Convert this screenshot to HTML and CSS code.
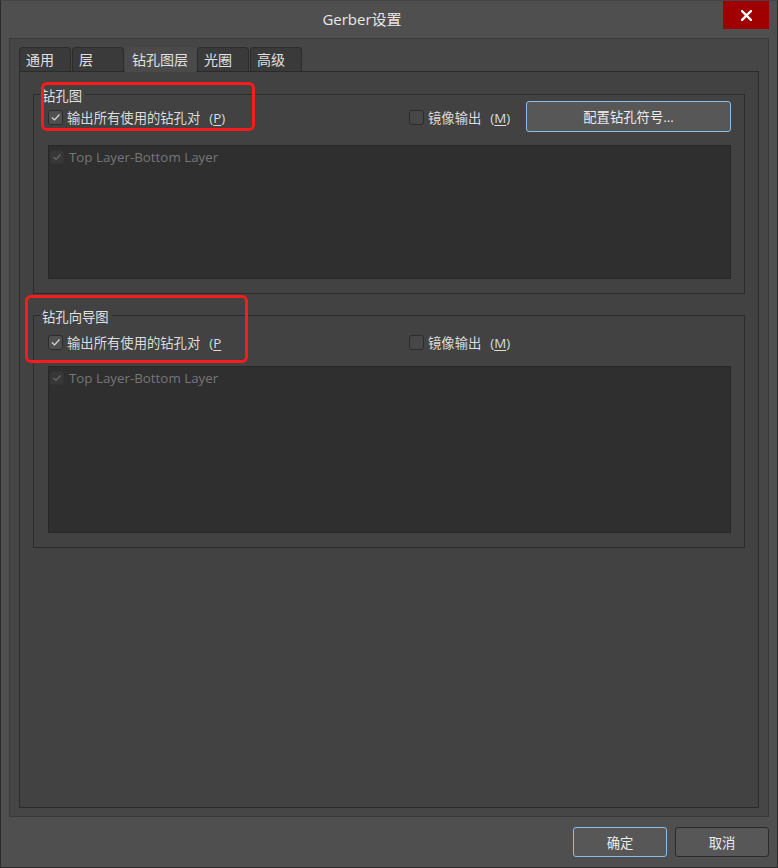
FILE: index.html
```html
<!DOCTYPE html>
<html lang="zh-CN">
<head>
<meta charset="utf-8">
<title>Gerber设置</title>
<link rel="stylesheet" href="styles.css">
</head>
<body>
<div class="window">
  <div class="titlebar">
    <div class="title">Gerber设置</div>
    <div class="close">
      <svg width="11" height="11" viewBox="0 0 11 11"><path d="M1 1L10 10M10 1L1 10" stroke="#fff" stroke-width="2.4" stroke-linecap="square"/></svg>
    </div>
  </div>
  <div class="panel">
    <div class="tabs">
      <div class="tab">通用</div>
      <div class="tab">层</div>
      <div class="tab active">钻孔图层</div>
      <div class="tab">光圈</div>
      <div class="tab">高级</div>
    </div>
    <div class="content">
      <div class="group g1">
        <div class="legend">钻孔图</div>
        <div class="row">
          <label class="check first"><span class="box checked"><svg width="11" height="11" viewBox="0 0 11 11"><path d="M2 5.5L4.5 8L9.5 2.5" fill="none" stroke="#d8d8d8" stroke-width="1.2"/></svg></span><span>输出所有使用的钻孔对<span class="acc">(<u>P</u>)</span></span></label>
          <label class="check"><span class="box"></span><span>镜像输出<span class="acc">(<u>M</u>)</span></span></label>
          <div class="btn primary config">配置钻孔符号...</div>
        </div>
        <div class="list l1">
          <div class="item"><span class="box dis"><svg width="10" height="10" viewBox="0 0 10 10"><path d="M1.5 5L4 7.5L8.5 2.5" fill="none" stroke="#6a6a6a" stroke-width="1.2"/></svg></span><span>Top Layer-Bottom Layer</span></div>
        </div>
      </div>
      <div class="group g2">
        <div class="legend">钻孔向导图</div>
        <div class="row">
          <label class="check first"><span class="box checked"><svg width="11" height="11" viewBox="0 0 11 11"><path d="M2 5.5L4.5 8L9.5 2.5" fill="none" stroke="#d8d8d8" stroke-width="1.2"/></svg></span><span>输出所有使用的钻孔对<span class="acc">(<u>P</u></span></span></label>
          <label class="check"><span class="box"></span><span>镜像输出<span class="acc">(<u>M</u>)</span></span></label>
        </div>
        <div class="list l2">
          <div class="item"><span class="box dis"><svg width="10" height="10" viewBox="0 0 10 10"><path d="M1.5 5L4 7.5L8.5 2.5" fill="none" stroke="#6a6a6a" stroke-width="1.2"/></svg></span><span>Top Layer-Bottom Layer</span></div>
        </div>
      </div>
    </div>
  </div>
  <div class="footer">
    <div class="btn primary">确定</div>
    <div class="btn">取消</div>
  </div>
  <div class="mark m1"></div>
  <div class="mark m2"></div>
</div>
</body>
</html>
```
FILE: styles.css
```css
html, body {
  margin: 0;
  padding: 0;
  background: #4f4f4f;
}
body {
  font-family: "Open Sans", "Noto Sans CJK SC", sans-serif;
  font-size: 13.33px;
  color: #dcdcdc;
}
.window {
  position: relative;
  width: 778px;
  height: 868px;
  box-sizing: border-box;
  border: 1px solid #2b2b2b;
  border-top-color: #444;
  background: #4f4f4f;
  display: flex;
  flex-direction: column;
}
.titlebar {
  height: 37px;
  display: flex;
  align-items: flex-start;
  flex: none;
}
.title {
  flex: 1;
  text-align: center;
  line-height: 37px;
  font-size: 15px;
  color: #e8e8e8;
}
.close {
  width: 46px;
  height: 28px;
  margin-right: 8px;
  background: #a00000;
  display: flex;
  align-items: center;
  justify-content: center;
}
.panel {
  flex: none;
  height: 779px;
  box-sizing: border-box;
  margin: 0 8px;
  border: 1px solid #3a3a3a;
  background: #464646;
  padding: 8px 9px;
  display: flex;
  flex-direction: column;
}
.tabs {
  height: 24px;
  display: flex;
  align-items: flex-start;
  gap: 1px;
  flex: none;
}
.tab {
  position: relative;
  width: 52px;
  height: 24px;
  box-sizing: border-box;
  border: 1px solid #2c2c2c;
  border-bottom: none;
  border-radius: 4px 4px 0 0;
  background: #3a3a3a;
  padding-left: 6px;
  line-height: 23px;
  font-size: 14px;
  color: #e0e0e0;
}
.tab.active {
  width: 71px;
  height: 25px;
  margin-bottom: -1px;
  z-index: 1;
  background: #4a4a4a;
  border-color: #4a4a4a;
}
.content {
  flex: 1;
  border: 1px solid #2b2b2b;
  background: #424242;
  padding: 22px 13px 0 13px;
}
.group {
  border: 1px solid #2b2b2b;
  padding: 0 13px 14px 14px;
}
.g2 {
  margin-top: 21px;
}
.legend {
  width: fit-content;
  margin: -7px 0 0 -8px;
  padding: 0 3px 0 2px;
  line-height: 16px;
  background: #424242;
  color: #e0e0e0;
}
.row {
  height: 20px;
  margin-top: 3px;
  display: flex;
  align-items: center;
}
.g2 .row {
  margin-top: 7px;
}
.check {
  display: flex;
  align-items: center;
  gap: 4px;
  white-space: nowrap;
}
.check.first {
  flex: 0 0 361px;
}
.acc {
  margin-left: 9px;
}
.box {
  width: 15px;
  height: 15px;
  box-sizing: border-box;
  border: 1px solid #2c2c2c;
  border-radius: 3px;
  background: #474747;
  display: flex;
  align-items: center;
  justify-content: center;
  flex: none;
}
.box.checked {
  background: #505050;
}
.box.dis {
  width: 14px;
  height: 14px;
  background: #383838;
  border-color: #333;
}
u {
  text-decoration: underline;
  text-underline-offset: 2px;
}
.btn {
  width: 94px;
  height: 30px;
  box-sizing: border-box;
  border: 1px solid #2b2b2b;
  border-radius: 3px;
  background: #575757;
  display: flex;
  align-items: center;
  justify-content: center;
  color: #ececec;
}
.btn.primary {
  border-color: #8fbde8;
}
.config {
  width: 205px;
  height: 31px;
  margin: -6px 0 -5px auto;
}
.list {
  box-sizing: border-box;
  border: 1px solid #272727;
  background: #2f2f2f;
  padding: 3px 1px 0 1px;
}
.l1 {
  margin-top: 18px;
  height: 134px;
}
.l2 {
  margin-top: 14px;
  height: 167px;
}
.item {
  height: 16px;
  display: flex;
  align-items: center;
  gap: 5px;
  color: #767676;
}
.footer {
  flex: 1;
  display: flex;
  justify-content: flex-end;
  gap: 8px;
  padding: 10px 8px 0 0;
}
.mark {
  position: absolute;
  box-sizing: border-box;
  border: 3px solid #f81c1c;
  border-radius: 6px;
}
.m1 {
  left: 40px;
  top: 81px;
  width: 214px;
  height: 49px;
}
.m2 {
  left: 24px;
  top: 294px;
  width: 223px;
  height: 68px;
}
```
